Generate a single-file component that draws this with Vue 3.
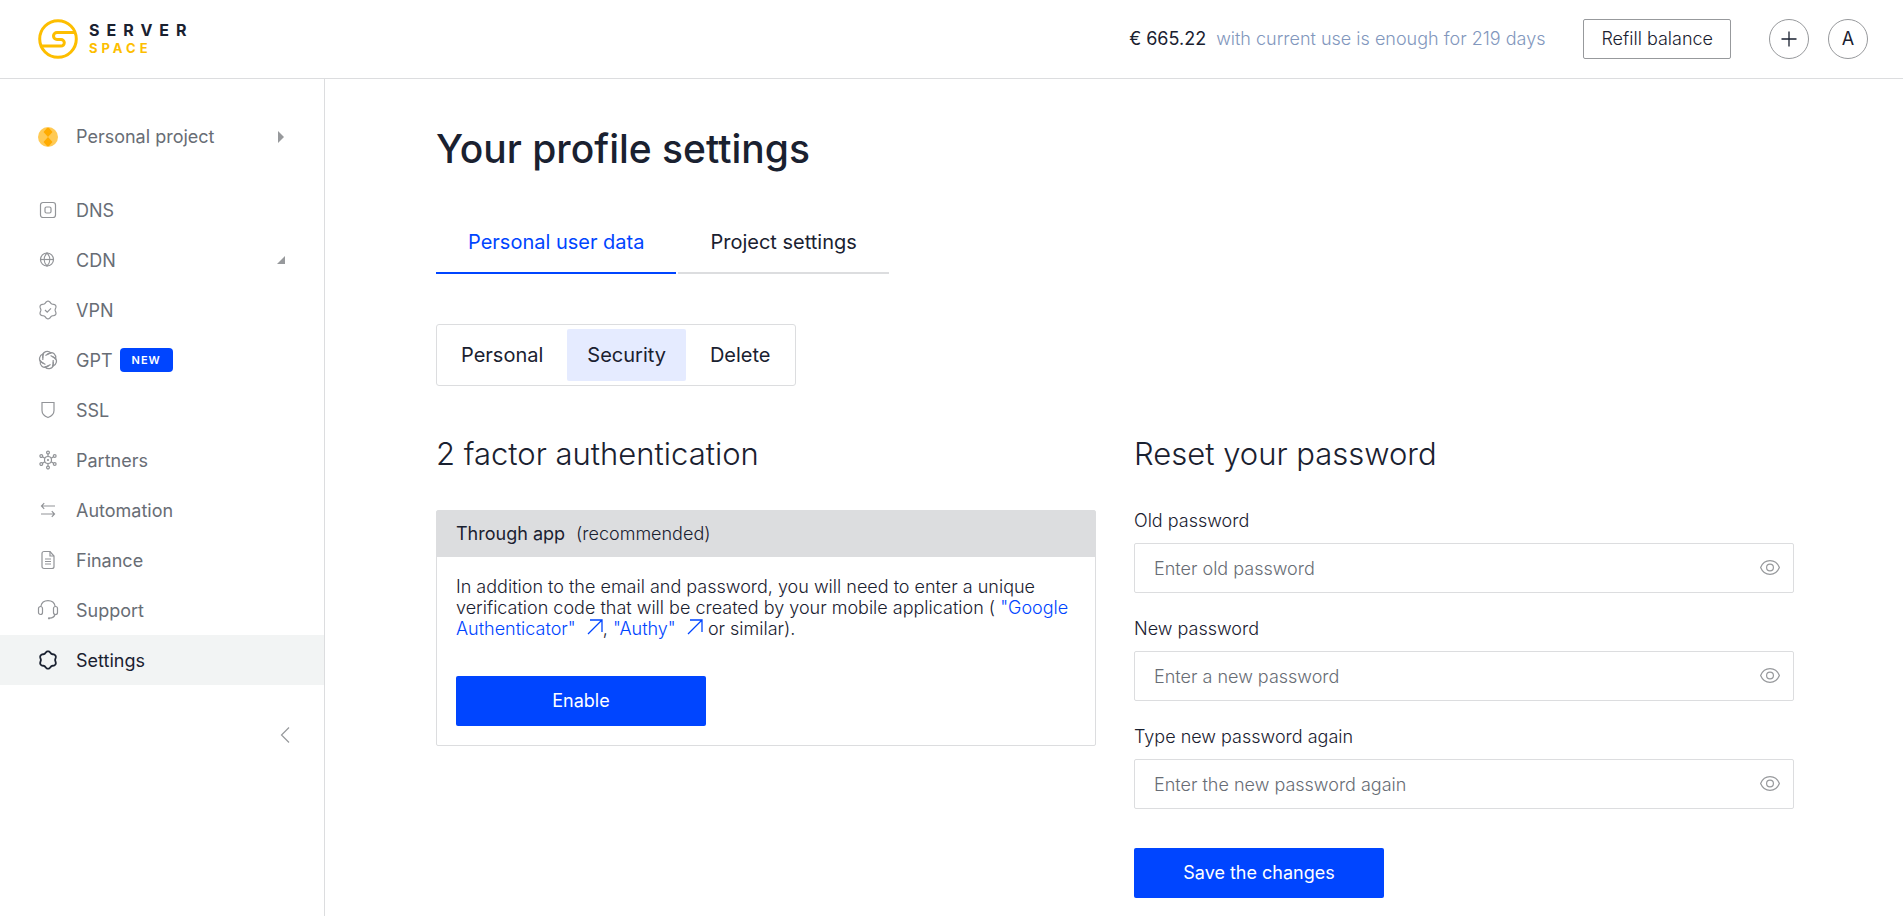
<script setup>
import { ref } from 'vue'

// Closed six-lobed outline centred on (10, 10)
function lobes(base, swing) {
  let d = ''
  for (let i = 0; i < 72; i++) {
    const a = (i / 72) * Math.PI * 2
    const r = base + swing * Math.cos(6 * a)
    d += `${i ? 'L' : 'M'}${(10 + r * Math.sin(a)).toFixed(2)} ${(10 - r * Math.cos(a)).toFixed(2)}`
  }
  return d + 'Z'
}

const ring = (x, y, r) => `M${x - r} ${y}a${r} ${r} 0 1 0 ${2 * r} 0a${r} ${r} 0 1 0 ${-2 * r} 0Z`

const items = [
  { label: 'DNS', paths: ['M5 2.5h10a2.5 2.5 0 0 1 2.5 2.5v10a2.5 2.5 0 0 1-2.5 2.5H5A2.5 2.5 0 0 1 2.5 15V5A2.5 2.5 0 0 1 5 2.5Z', 'M8.5 7h3A1.5 1.5 0 0 1 13 8.5v3a1.5 1.5 0 0 1-1.5 1.5h-3A1.5 1.5 0 0 1 7 11.5v-3A1.5 1.5 0 0 1 8.5 7Z'] },
  { label: 'CDN', expandable: true, paths: [ring(9, 9.5, 6.5), 'M2.5 9.5h13', 'M9 3C5.3 7 5.3 12 9 16C12.7 12 12.7 7 9 3Z'] },
  { label: 'VPN', paths: [lobes(8, 0.9), 'M7 10l2.2 2.2L13 8.3'] },
  { label: 'GPT', badge: 'NEW', gpt: true, paths: [] },
  { label: 'SSL', paths: ['M4 2.5h12V10.5C16 13.5 14 16 10 17.5C6 16 4 13.5 4 10.5Z'] },
  { label: 'Partners', paths: [ring(10, 10, 3.5), ring(10, 10, 0.5), ring(10, 2.5, 1.4), ring(10, 17.5, 1.4), ring(3.3, 6, 1.4), ring(16.7, 6, 1.4), ring(3.3, 14, 1.4), ring(16.7, 14, 1.4), 'M10 4v2.5M10 13.5V16M4.5 6.7l2.3 1.5M15.5 6.7l-2.3 1.5M4.5 13.3l2.3-1.5M15.5 13.3l-2.3-1.5'] },
  { label: 'Automation', paths: ['M17 6H3.5M6.2 3.2L3.5 6l2.7 2.8', 'M3 14h13.5M13.8 11.2L16.5 14l-2.7 2.8'] },
  { label: 'Finance', paths: ['M6 1.5h6L16 6v10.5a2 2 0 0 1-2 2H6a2 2 0 0 1-2-2v-13a2 2 0 0 1 2-2Z', 'M12 1.5V6h4', 'M7 9h6M7 11.5h6M7 14h6'] },
  { label: 'Support', paths: ['M2.5 6.5h0a2 2 0 0 1 2 2v4a2 2 0 0 1-4 0v-4a2 2 0 0 1 2-2Z', 'M17.5 6.5h0a2 2 0 0 1 2 2v4a2 2 0 0 1-4 0v-4a2 2 0 0 1 2-2Z', 'M2.8 6.5C3.5 3 6.5 .7 10 .7S16.5 3 17.2 6.5', 'M17 14.5C16.5 16.5 14.5 18 11.5 18.2', ring(11, 18.3, 0.5)] },
  { label: 'Settings', active: true, paths: [lobes(7.9, 0.8)] },
]

const petals = [0, 60, 120, 180, 240, 300]

const tabs = ['Personal user data', 'Project settings']
const sections = ['Personal', 'Security', 'Delete']
const tab = ref('Personal user data')
const section = ref('Security')

const fields = ref([
  { id: 'old', label: 'Old password', hint: 'Enter old password', shown: false },
  { id: 'new', label: 'New password', hint: 'Enter a new password', shown: false },
  { id: 'again', label: 'Type new password again', hint: 'Enter the new password again', shown: false },
])
</script>

<template>
  <div class="page">
    <header class="topbar">
      <a href="#" class="logo" aria-label="Serverspace">
        <svg class="logo-mark" viewBox="0 0 40 40" fill="none" stroke="#fdbe00" stroke-width="3">
          <circle cx="20" cy="20" r="18.3" />
          <path d="M36.5 13.5H19a3.5 3.5 0 0 0 0 7h4a3.3 3.3 0 0 1 0 6.6H3.5" />
        </svg>
        <span class="wordmark">
          <span class="word-top">SERVER</span>
          <span class="word-bottom">SPACE</span>
        </span>
      </a>
      <div class="account">
        <p class="balance"><strong>€ 665.22</strong><span>with current use is enough for 219 days</span></p>
        <button type="button" class="refill">Refill balance</button>
        <div class="round-group">
          <button type="button" class="round" aria-label="Create">
            <svg width="16" height="16" viewBox="0 0 16 16" stroke="currentColor" stroke-width="1.3"><path d="M8 .5v15M.5 8h15" /></svg>
          </button>
          <button type="button" class="round">A</button>
        </div>
      </div>
    </header>

    <div class="body">
      <aside class="sidebar">
        <a href="#" class="row project">
          <svg class="icon" viewBox="0 0 20 20">
            <circle cx="10" cy="10" r="10" fill="#ffca55" />
            <path d="M5.5 5L9 1h2l3.5 4L10 10ZM5.5 15L9 19h2l3.5-4L10 10Z" fill="#ffab00" />
          </svg>
          <span>Personal project</span>
          <svg class="caret" width="8" height="12" viewBox="0 0 8 12"><path d="M1 0l6 6-6 6Z" fill="#97999c" /></svg>
        </a>
        <nav class="menu">
          <a v-for="item in items" :key="item.label" href="#" class="row" :class="{ active: item.active }">
            <svg class="icon line" viewBox="0 0 20 20">
              <path v-for="(d, i) in item.paths" :key="i" :d="d" />
              <template v-if="item.gpt">
                <path v-for="p in petals" :key="p" :transform="`rotate(${p} 10 10)`" d="M4.700 8.200V5.400C5 1.600 9.700 0 12.800 2.700M7.400 5.500L11 3.600C11.800 3.200 12.800 3 13.600 3.100" />
              </template>
            </svg>
            <span class="label">{{ item.label }}</span>
            <span v-if="item.badge" class="badge">{{ item.badge }}</span>
            <svg v-if="item.expandable" class="caret" width="8" height="8" viewBox="0 0 8 8"><path d="M8 0v8H0Z" fill="#97999c" /></svg>
          </a>
        </nav>
        <button type="button" class="collapse" aria-label="Collapse menu">
          <svg width="10" height="16" viewBox="0 0 10 16" fill="none" stroke="#97999c" stroke-width="1.2"><path d="M9 .5L1.5 8 9 15.5" /></svg>
        </button>
      </aside>

      <main class="content">
        <h1>Your profile settings</h1>
        <div class="tabs">
          <button v-for="t in tabs" :key="t" type="button" :class="{ on: t === tab }" @click="tab = t">{{ t }}</button>
        </div>
        <div class="segment">
          <button v-for="s in sections" :key="s" type="button" :class="{ on: s === section }" @click="section = s">{{ s }}</button>
        </div>

        <div class="columns">
          <section>
            <h2>2 factor authentication</h2>
            <div class="card">
              <div class="card-head"><strong>Through app</strong><span>(recommended)</span></div>
              <div class="card-body">
                <p>
                  In addition to the email and password, you will need to enter a unique verification code that will be created by your mobile application (
                  <a href="#">"Google Authenticator" <svg class="out" viewBox="0 0 16 16"><path d="M1 15L15 1M3 1h12v12" /></svg></a>,
                  <a href="#">"Authy" <svg class="out" viewBox="0 0 16 16"><path d="M1 15L15 1M3 1h12v12" /></svg></a>
                  or similar).
                </p>
                <button type="button" class="primary">Enable</button>
              </div>
            </div>
          </section>

          <section>
            <h2>Reset your password</h2>
            <form @submit.prevent>
              <div v-for="f in fields" :key="f.id" class="field">
                <label :for="f.id">{{ f.label }}</label>
                <div class="box">
                  <input :id="f.id" :type="f.shown ? 'text' : 'password'" :placeholder="f.hint" />
                  <button type="button" aria-label="Show password" @click="f.shown = !f.shown">
                    <svg width="20" height="16" viewBox="0 0 20 16" fill="none" stroke="#97999c" stroke-width="1.2"><path d="M.6 7.5C2.5 3 6 .7 10 .7S17.5 3 19.4 7.5C17.5 12 14 14.4 10 14.4S2.5 12 .6 7.5Z" /><circle cx="10" cy="7.5" r="3.4" /></svg>
                  </button>
                </div>
              </div>
              <button type="submit" class="primary">Save the changes</button>
            </form>
          </section>
        </div>
      </main>
    </div>
  </div>
</template>

<style>
body {
  margin: 0;
  background: #fff;
}
</style>

<style scoped>
.page {
  min-height: 100vh;
  display: flex;
  flex-direction: column;
  color: #1a2130;
  font: 400 18px/22px Inter, "Liberation Sans", sans-serif;
}
button {
  font: inherit;
  color: inherit;
  padding: 0;
  border: 0;
  background: none;
  cursor: pointer;
}
a {
  color: inherit;
  text-decoration: none;
}
p, h1, h2 {
  margin: 0;
}
.topbar {
  display: flex;
  align-items: center;
  justify-content: space-between;
  height: 78px;
  padding: 0 35px 0 38px;
  border-bottom: 1px solid #dcdddf;
}
.logo {
  display: flex;
  align-items: center;
  gap: 11px;
}
.logo-mark {
  width: 40px;
  height: 40px;
}
.wordmark {
  display: flex;
  flex-direction: column;
  font-weight: 700;
}
.word-top {
  font-size: 16px;
  line-height: 18px;
  letter-spacing: 7px;
}
.word-bottom {
  font-size: 13px;
  line-height: 18px;
  letter-spacing: 4px;
  color: #fdbe00;
}
.account {
  display: flex;
  align-items: center;
  gap: 38px;
}
.balance {
  display: flex;
  gap: 10px;
  color: #8297bd;
  font-weight: 300;
}
.balance strong {
  font-weight: 400;
  color: #1a2130;
}
.refill {
  height: 40px;
  padding: 0 17px;
  border: 1px solid #97999c;
  border-radius: 2px;
  font-weight: 300;
}
.round-group {
  display: flex;
  gap: 19px;
}
.round {
  display: flex;
  align-items: center;
  justify-content: center;
  width: 40px;
  height: 40px;
  border: 1px solid #97999c;
  border-radius: 50%;
}
.body {
  flex: 1;
  display: flex;
}
.sidebar {
  flex: 0 0 324px;
  padding-top: 33px;
  border-right: 1px solid #dcdddf;
  color: #686d75;
}
.row {
  display: flex;
  align-items: center;
  height: 50px;
  padding: 0 39px 0 38px;
}
.row .icon {
  width: 20px;
  height: 20px;
  margin-right: 18px;
}
.label {
  padding-top: 2px;
}
.line {
  overflow: visible;
  fill: none;
  stroke: #929498;
  stroke-width: 1.2;
}
.caret {
  margin-left: auto;
}
.menu {
  margin-top: 23px;
}
.active {
  background: #f2f4f4;
  color: #1a2130;
}
.active .line {
  stroke: #1a2130;
  stroke-width: 1.8;
}
.badge {
  margin-left: 7px;
  padding: 0 12px;
  border-radius: 4px;
  background: #0045ff;
  color: #fff;
  font-size: 11px;
  font-weight: 600;
  line-height: 24px;
  letter-spacing: 1px;
}
.collapse {
  display: block;
  margin: 42px 34px 0 auto;
}
.collapse svg {
  display: block;
}
.content {
  flex: 1;
  min-width: 0;
  padding: 46px 109px 18px 111px;
}
h1 {
  font-size: 39px;
  line-height: 48px;
  font-weight: 450;
}
.tabs {
  display: flex;
  gap: 2px;
  margin-top: 39px;
  font-size: 20px;
}
.tabs button {
  height: 62px;
  padding: 0 32px;
  border-bottom: 2px solid #dcdddf;
}
.tabs .on {
  border-color: #0045ff;
  color: #0045ff;
}
.segment {
  display: flex;
  gap: 4px;
  width: max-content;
  margin-top: 50px;
  padding: 4px;
  border: 1px solid #dcdddf;
  border-radius: 3px;
  font-size: 20px;
}
.segment button {
  height: 52px;
  padding: 0 20px;
  border-radius: 2px;
}
.segment .on {
  background: #e5ebff;
}
.columns {
  display: grid;
  grid-template-columns: 1fr 1fr;
  gap: 38px;
  margin-top: 50px;
}
h2 {
  font-size: 31px;
  line-height: 36px;
  font-weight: 300;
}
.card {
  margin-top: 38px;
  border: 1px solid #dcdddf;
  border-radius: 2px;
}
.card-head {
  display: flex;
  gap: 11px;
  padding: 12px 19px;
  background: #dcdddf;
  font-weight: 300;
}
.card-head strong {
  font-weight: 400;
}
.card-body {
  padding: 19px;
}
.card-body p {
  line-height: 21px;
  font-weight: 300;
}
.card-body a {
  color: #0045ff;
}
.out {
  width: 16px;
  height: 16px;
  margin-left: 6px;
  fill: none;
  stroke: #0045ff;
  stroke-width: 1.3;
}
.primary {
  width: 250px;
  height: 50px;
  border-radius: 2px;
  background: #0045ff;
  color: #fff;
}
.card-body .primary {
  margin-top: 37px;
}
.field {
  margin-bottom: 25px;
}
form {
  margin-top: 38px;
}
.field label {
  display: block;
  margin-bottom: 11px;
  font-weight: 300;
}
.box {
  display: flex;
  align-items: center;
  height: 48px;
  padding-right: 13px;
  border: 1px solid #dcdddf;
  border-radius: 2px;
}
.box input {
  flex: 1;
  min-width: 0;
  height: 100%;
  box-sizing: border-box;
  padding: 0 19px;
  border: 0;
  outline: 0;
  background: none;
  color: inherit;
  font: inherit;
  font-weight: 300;
}
.box input::placeholder {
  color: #686d75;
}
.box svg {
  display: block;
}
form .primary {
  margin-top: 14px;
}
</style>
